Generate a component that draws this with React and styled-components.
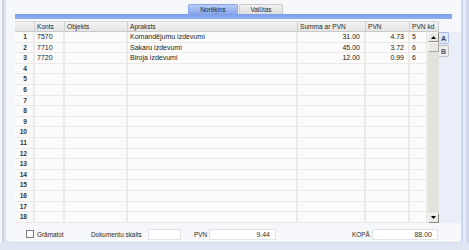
import React from 'react'
import styled, { createGlobalStyle } from 'styled-components'

const GlobalStyle = createGlobalStyle`
  html, body { margin: 0; padding: 0; }
  body {
    width: 469px;
    height: 250px;
    overflow: hidden;
    background: #dfe5f1;
    font-family: "Liberation Sans", Arial, sans-serif;
    font-size: 7px;
    color: #1a1a1a;
  }
`

const Frame = styled.div`
  display: flex;
  height: 243px;
`

const LeftEdge = styled.div`
  width: 5px;
  background: linear-gradient(to right, #f4f6fa 0 2px, #c9d3e8 2px 4px, #e3e8f3 4px);
`

const RightEdge = styled.div`
  width: 7px;
  background: linear-gradient(to right, #c6d2ea 0 1px, #e6ebf6 1px 4px, #cdd7ee 4px);
`

const Panel = styled.div`
  flex: 1;
  display: flex;
  flex-direction: column;
  background: #f6f7fb;
  border: 1px solid #d3dae9;
  border-top: none;
  border-radius: 0 0 5px 5px;
  padding: 4px 0 0 9px;
`

const TabRow = styled.div`
  display: flex;
  padding-left: 173px;
  height: 10px;
`

const Tab = styled.div`
  width: ${p => p.$w}px;
  margin-right: 1px;
  display: flex;
  align-items: center;
  justify-content: center;
  border: 1px solid ${p => (p.$active ? '#8aa5e4' : '#c9c9c9')};
  border-bottom: none;
  border-radius: 2px 2px 0 0;
  background: ${p => (p.$active ? 'linear-gradient(#b9cdf5, #86a6ea)' : 'linear-gradient(#f1f1f1, #dedede)')};
  color: #202840;
  font-size: 6.5px;
`

const BlueBar = styled.div`
  width: 437px;
  height: 5px;
  background: linear-gradient(#7d9ee8, #90aeee);
  margin-bottom: 2px;
`

const GridArea = styled.div`
  display: flex;
`

const Grid = styled.div`
  width: 424px;
  display: flex;
  flex-direction: column;
`

const cols = '20px 30px 63px 170px 68px 44px 18px'

const HeaderRow = styled.div`
  display: grid;
  grid-template-columns: ${cols} 11px;
  height: 11px;
  background: linear-gradient(#f2f2f2, #e4e4e4);
  border-top: 1px solid #d8d8d8;
  box-sizing: border-box;
`

const HeadCell = styled.div`
  grid-column: span ${p => p.$span || 1};
  border-right: 1px solid #cfcfcf;
  border-bottom: 1px solid #c8c8c8;
  padding-left: 2px;
  line-height: 10px;
  font-size: 6.6px;
  color: #2a2a2a;
  white-space: nowrap;
  overflow: hidden;
`

const Body = styled.div`
  display: flex;
`

const Rows = styled.div`
  width: 413px;
`

const Row = styled.div`
  display: grid;
  grid-template-columns: ${cols};
  height: 10.6px;
  background: #fcfcfc;
`

const Cell = styled.div`
  border-right: 2px solid #ebebeb;
  border-bottom: 1px solid #efe8e8;
  padding: 0 ${p => (p.$right ? '4px' : '2px')};
  text-align: ${p => (p.$right ? 'right' : 'left')};
  line-height: 10px;
  white-space: nowrap;
  overflow: hidden;
  box-sizing: border-box;
`

const NumCell = styled(Cell)`
  text-align: right;
  padding-right: 6px;
  font-weight: bold;
  color: #333;
  font-size: 6.6px;
`

const Scrollbar = styled.div`
  width: 11px;
  display: flex;
  flex-direction: column;
  background: #e3e1db;
`

const ScrollButton = styled.div`
  height: 10px;
  box-sizing: border-box;
  background: #ebe9e3;
  border: 1px solid;
  border-color: #fbfbf9 #8c8a84 #8c8a84 #fbfbf9;
  display: flex;
  align-items: center;
  justify-content: center;
  margin-top: ${p => (p.$bottom ? 'auto' : '0')};
`

const Thumb = styled.div`
  height: 10px;
  box-sizing: border-box;
  background: #ebe9e3;
  border: 1px solid;
  border-color: #fbfbf9 #a8a69f #a8a69f #fbfbf9;
`

const SideColumn = styled.div`
  flex: 1;
  margin-top: 11px;
  background: #e9eef9;
  display: flex;
  flex-direction: column;
  align-items: flex-start;
`

const SideTab = styled.div`
  width: 10px;
  height: 12px;
  box-sizing: border-box;
  display: flex;
  align-items: center;
  justify-content: center;
  font-size: 7px;
  font-weight: bold;
  border: 1px solid ${p => (p.$active ? '#a9bde6' : '#c4c4c4')};
  border-left: none;
  border-radius: 0 2px 2px 0;
  background: ${p => (p.$active ? '#dfe8fc' : '#ececec')};
  color: ${p => (p.$active ? '#26407a' : '#555')};
  margin-top: ${p => (p.$active ? '0' : '1px')};
`

const Footer = styled.div`
  display: flex;
  align-items: center;
  height: 15px;
  margin-top: 4px;
  padding-left: 11px;
  font-size: 6.4px;
`

const CheckBox = styled.div`
  width: 6px;
  height: 6px;
  border: 1px solid #7b7b7b;
  background: #fff;
  margin-right: 3px;
`

const Label = styled.span`
  width: ${p => p.$w}px;
  margin-left: ${p => p.$ml || 0}px;
  color: #2a2a2a;
  white-space: nowrap;
`

const Input = styled.div`
  width: ${p => p.$w}px;
  height: 11px;
  box-sizing: border-box;
  background: #fff;
  border: 1px solid #e3e3e3;
  text-align: right;
  padding-right: 5px;
  line-height: 10px;
  color: #333;
  font-size: 7px;
`

const Arrow = ({ up }) => (
  <svg width="5" height="3" viewBox="0 0 5 3">
    <polygon points={up ? '0,3 5,3 2.5,0' : '0,0 5,0 2.5,3'} fill="#000" />
  </svg>
)

const data = [
  ['7570', '', 'Komandējumu izdevumi', '31.00', '4.73', '5'],
  ['7710', '', 'Sakaru izdevumi', '45.00', '3.72', '6'],
  ['7720', '', 'Biroja izdevumi', '12.00', '0.99', '6'],
]

export default function App() {
  const rows = Array.from({ length: 18 }, (_, i) => data[i] || ['', '', '', '', '', ''])
  return (
    <>
      <GlobalStyle />
      <Frame>
        <LeftEdge />
        <Panel>
          <TabRow>
            <Tab $active $w={48}>Norēķins</Tab>
            <Tab $w={42}>Valūtas</Tab>
          </TabRow>
          <BlueBar />
          <GridArea>
            <Grid>
              <HeaderRow>
                <HeadCell />
                <HeadCell>Konts</HeadCell>
                <HeadCell>Objekts</HeadCell>
                <HeadCell>Apraksts</HeadCell>
                <HeadCell>Summa ar PVN</HeadCell>
                <HeadCell>PVN</HeadCell>
                <HeadCell $span={2}>PVN kd</HeadCell>
              </HeaderRow>
              <Body>
                <Rows>
                  {rows.map((r, i) => (
                    <Row key={i}>
                      <NumCell>{i + 1}</NumCell>
                      <Cell>{r[0]}</Cell>
                      <Cell>{r[1]}</Cell>
                      <Cell>{r[2]}</Cell>
                      <Cell $right>{r[3]}</Cell>
                      <Cell $right>{r[4]}</Cell>
                      <Cell>{r[5]}</Cell>
                    </Row>
                  ))}
                </Rows>
                <Scrollbar>
                  <ScrollButton><Arrow up /></ScrollButton>
                  <Thumb />
                  <ScrollButton $bottom><Arrow /></ScrollButton>
                </Scrollbar>
              </Body>
            </Grid>
            <SideColumn>
              <SideTab $active>A</SideTab>
              <SideTab>B</SideTab>
            </SideColumn>
          </GridArea>
          <Footer>
            <CheckBox />
            <Label $w={54}>Grāmatot</Label>
            <Label $w={57}>Dokumentu skaits</Label>
            <Input $w={33} />
            <Label $ml={13} $w={15}>PVN</Label>
            <Input $w={67}>9.44</Input>
            <Label $ml={76} $w={20}>KOPĀ</Label>
            <Input $w={66}>88.00</Input>
          </Footer>
        </Panel>
        <RightEdge />
      </Frame>
    </>
  )
}
